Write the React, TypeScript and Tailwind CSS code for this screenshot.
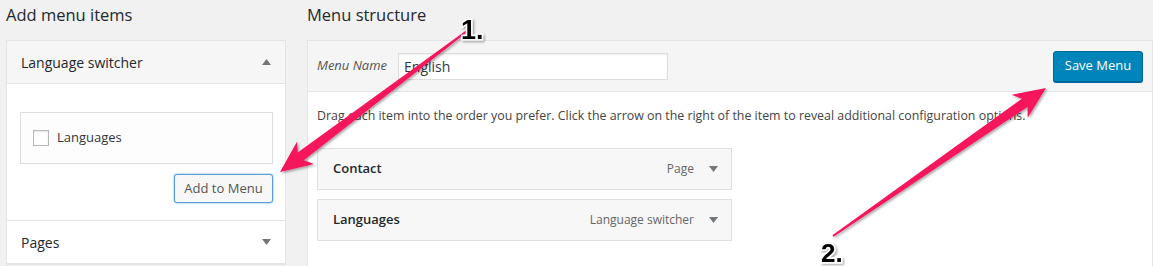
import React from 'react';

const font = { fontFamily: '"Open Sans", "Noto Sans", sans-serif' };

function arrowPoints(sx: number, sy: number, tx: number, ty: number) {
  const dx = sx - tx;
  const dy = sy - ty;
  const len = Math.hypot(dx, dy);
  const ux = dx / len;
  const uy = dy / len;
  const nx = -uy;
  const ny = ux;
  const head = 26;
  const back = 32;
  const headW = 14;
  const shaftW = 10;
  const tailW = 2;
  const p = (a: number, b: number) => `${(tx + ux * a + nx * b).toFixed(1)},${(ty + uy * a + ny * b).toFixed(1)}`;
  return [
    p(len, tailW / 2),
    p(head, shaftW / 2),
    p(back, headW),
    p(0, 0),
    p(back, -headW),
    p(head, -shaftW / 2),
    p(len, -tailW / 2),
  ].join(' ');
}

function Caret({ up = false }: { up?: boolean }) {
  return (
    <svg width="9" height="6" viewBox="0 0 9 6" className="shrink-0">
      <polygon points={up ? '0,6 9,6 4.5,0' : '0,0 9,0 4.5,6'} fill="#72777c" />
    </svg>
  );
}

function MenuItem({ title, type }: { title: string; type: string }) {
  return (
    <div className="h-[42px] w-[415px] flex items-center border border-[#dfdfdf] bg-[#f7f7f7] pl-[15px] pr-[13px]">
      <span className="text-[13px] font-semibold text-[#23282d]">{title}</span>
      <span className="ml-auto text-[12px] text-[#666]">{type}</span>
      <span className="ml-[15px]">
        <Caret />
      </span>
    </div>
  );
}

export default function App() {
  return (
    <div className="relative h-[266px] w-[1153px] overflow-hidden bg-[#f1f1f1] text-[#32373c]" style={font}>
      <div className="flex pl-[6px]">
        {/* left column */}
        <div className="w-[280px] shrink-0">
          <h2 className="h-[40px] pt-[3px] text-[16.5px] font-medium text-[#23282d]">Add menu items</h2>
          <div className="border border-[#e2e4e7] bg-white">
            <div className="h-[43px] flex items-center justify-between pl-[14px] pr-[14px] bg-[#f6f6f6] border-b border-[#e2e4e7]">
              <span className="text-[14px] text-[#23282d]">Language switcher</span>
              <Caret up />
            </div>
            <div className="px-[13px] pt-[28px] pb-[17px] pr-[12px] flex flex-col items-end border-b border-[#e2e4e7]">
              <div className="w-full h-[52px] border border-[#ddd] bg-[#fdfdfd] flex items-center pl-[12px]">
                <span className="w-[16px] h-[16px] border border-[#b4b9be] bg-white shadow-[inset_0_1px_2px_rgba(0,0,0,0.1)]" />
                <span className="ml-[8px] text-[13px]">Languages</span>
              </div>
              <button className="mt-[10px] h-[29px] w-[99px] rounded-[3px] border border-[#5b9dd9] bg-[#f7f7f7] text-[13px] text-[#555] shadow-[0_0_2px_rgba(30,140,190,0.8)]">
                Add to Menu
              </button>
            </div>
            <div className="h-[43px] flex items-center justify-between pl-[14px] pr-[14px] bg-white border-b border-[#e2e4e7]">
              <span className="text-[14px] text-[#23282d]">Pages</span>
              <Caret />
            </div>
          </div>
        </div>

        {/* right column */}
        <div className="ml-[21px] w-[846px] shrink-0">
          <h2 className="h-[40px] pt-[3px] text-[16.5px] font-medium text-[#23282d]">Menu structure</h2>
          <div className="border border-[#e2e4e7] bg-white h-[240px]">
            <div className="h-[51px] flex items-center bg-[#f5f5f5] border-b border-[#e2e4e7] pl-[9px] pr-[9px]">
              <span className="text-[13px] italic text-[#555]">Menu Name</span>
              <div className="ml-[11px] h-[27px] w-[270px] border border-[#ddd] bg-white flex items-center pl-[5px] text-[14px] text-[#32373c] shadow-[inset_0_1px_2px_rgba(0,0,0,0.07)]">
                English
              </div>
              <button className="ml-auto h-[31px] w-[90px] rounded-[3px] border border-[#006799] bg-[#0085ba] text-[13px] text-white shadow-[0_1px_0_#006799]">
                Save Menu
              </button>
            </div>
            <div className="pl-[9px] pt-[14px]">
              <p className="text-[12.4px] text-[#444] leading-[20px]">
                Drag each item into the order you prefer. Click the arrow on the right of the item to reveal additional configuration options.
              </p>
              <div className="mt-[22px] flex flex-col gap-[9px]">
                <MenuItem title="Contact" type="Page" />
                <MenuItem title="Languages" type="Language switcher" />
              </div>
            </div>
          </div>
        </div>
      </div>

      {/* annotation overlay */}
      <svg className="absolute inset-0 pointer-events-none" width="1153" height="266">
        <defs>
          <filter id="sh" x="-10%" y="-10%" width="120%" height="120%">
            <feDropShadow dx="1.5" dy="1.5" stdDeviation="1.2" floodColor="#000" floodOpacity="0.35" />
          </filter>
        </defs>
        <polygon points={arrowPoints(467, 31, 280, 172)} fill="#f5145c" filter="url(#sh)" />
        <polygon points={arrowPoints(833, 236, 1046, 88)} fill="#f5145c" filter="url(#sh)" />
        <text x="461" y="39" fontSize="27" fontWeight="700" fill="#000" stroke="#fff" strokeWidth="3" paintOrder="stroke" filter="url(#sh)" style={{ fontFamily: '"Liberation Sans", Arial, sans-serif' }}>
          1.
        </text>
        <text x="821" y="262" fontSize="26" fontWeight="700" fill="#000" stroke="#fff" strokeWidth="3" paintOrder="stroke" filter="url(#sh)" style={{ fontFamily: '"Liberation Sans", Arial, sans-serif' }}>
          2.
        </text>
      </svg>
    </div>
  );
}
